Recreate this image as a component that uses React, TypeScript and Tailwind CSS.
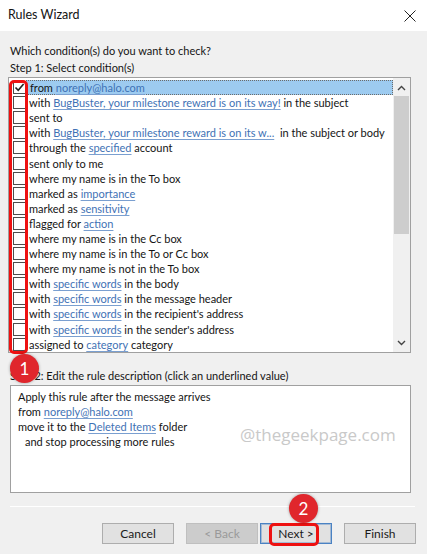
import React from "react";

type Part = string | { link: string };

const rows: Part[][] = [
  ["from ", { link: "noreply@halo.com" }],
  ["with ", { link: "BugBuster, your milestone reward is on its way!" }, " in the subject"],
  ["sent to"],
  ["with ", { link: "BugBuster, your milestone reward is on its w..." }, "\u00a0 in the subject or body"],
  ["through the ", { link: "specified" }, " account"],
  ["sent only to me"],
  ["where my name is in the To box"],
  ["marked as ", { link: "importance" }],
  ["marked as ", { link: "sensitivity" }],
  ["flagged for ", { link: "action" }],
  ["where my name is in the Cc box"],
  ["where my name is in the To or Cc box"],
  ["where my name is not in the To box"],
  ["with ", { link: "specific words" }, " in the body"],
  ["with ", { link: "specific words" }, " in the message header"],
  ["with ", { link: "specific words" }, " in the recipient's address"],
  ["with ", { link: "specific words" }, " in the sender's address"],
  ["assigned to ", { link: "category" }, " category"],
];

const Link = ({ children }: { children: React.ReactNode }) => (
  <span className="text-[#3f72b5] underline underline-offset-[2px] decoration-[#7a9fd0]">{children}</span>
);

const Checkbox = ({ checked }: { checked?: boolean }) => (
  <span className="w-[13px] h-[13px] border border-[#4d4d4d] bg-white flex items-center justify-center shrink-0">
    {checked && (
      <svg width="11" height="11" viewBox="0 0 11 11">
        <path d="M1.5 5.5 L4.2 8.3 L9.6 2" fill="none" stroke="#222" strokeWidth="1.6" />
      </svg>
    )}
  </span>
);

const Button = ({ label, variant }: { label: string; variant?: "disabled" | "default" }) => (
  <div
    className={
      "w-[72px] h-[21px] flex items-center justify-center text-[12px] border " +
      (variant === "disabled"
        ? "bg-[#cccccc] border-[#bfbfbf] text-[#9a9a9a]"
        : variant === "default"
        ? "bg-[#e1e1e1] border-[#4a82c3] text-[#1a1a1a] outline outline-1 -outline-offset-2 outline-[#4a82c3]/40"
        : "bg-[#e1e1e1] border-[#adadad] text-[#1a1a1a]")
    }
  >
    {label}
  </div>
);

export default function App() {
  return (
    <div
      className="relative w-[427px] h-[554px] bg-[#f0f0f0] overflow-hidden text-[#141414]"
      style={{ fontFamily: 'Lato, "Noto Sans", sans-serif' }}
    >
      {/* Title bar */}
      <div className="h-[31px] bg-white flex items-center justify-between pl-[8px] pr-[11px]">
        <span className="text-[12.5px]">Rules Wizard</span>
        <svg width="12" height="12" viewBox="0 0 12 12">
          <path d="M0.5 0.5 L11.5 11.5 M11.5 0.5 L0.5 11.5" stroke="#222" strokeWidth="1" />
        </svg>
      </div>

      <div className="px-[8px] pt-[12px] text-[11px]">
        <div className="pl-[2px] leading-[16px]">Which condition(s) do you want to check?</div>
        <div className="pl-[2px] leading-[16px] mt-[1px]">Step 1: Select condition(s)</div>

        {/* Conditions list */}
        <div className="mt-[1px] w-[403px] h-[276px] border border-[#a0a0a0] bg-white flex">
          <div className="flex-1 pt-[2px] pl-[4px]">
            {rows.map((parts, i) => (
              <div key={i} className="flex items-center h-[15.1px]">
                <Checkbox checked={i === 0} />
                <div
                  className={
                    "flex-1 h-full flex items-center pl-[3px] whitespace-nowrap leading-none " +
                    (i === 0 ? "bg-[#9dcbf0] border border-dotted border-[#6b6b6b]" : "")
                  }
                >
                  {parts.map((p, j) =>
                    typeof p === "string" ? <span key={j} className="whitespace-pre">{p}</span> : <Link key={j}>{p.link}</Link>
                  )}
                </div>
              </div>
            ))}
          </div>
          <div className="w-[17px] flex flex-col bg-[#f0f0f0] pt-[2px] pb-[1px]">
            <div className="h-[16px] flex items-center justify-center">
              <svg width="9" height="6" viewBox="0 0 9 6">
                <path d="M1 5 L4.5 1.5 L8 5" fill="none" stroke="#444" strokeWidth="1.4" />
              </svg>
            </div>
            <div className="h-[138px] mx-[1px] bg-[#cdcdcd]" />
            <div className="flex-1" />
            <div className="h-[16px] flex items-center justify-center">
              <svg width="9" height="6" viewBox="0 0 9 6">
                <path d="M1 1 L4.5 4.5 L8 1" fill="none" stroke="#444" strokeWidth="1.4" />
              </svg>
            </div>
          </div>
        </div>

        <div className="pl-[2px] mt-[15px] leading-[16px]">Step 2: Edit the rule description (click an underlined value)</div>

        {/* Rule description */}
        <div className="ml-[2px] mt-[1px] w-[401px] h-[108px] border border-[#a0a0a0] bg-white pl-[7px] pt-[3px] leading-[15px]">
          <div>Apply this rule after the message arrives</div>
          <div>
            from <Link>noreply@halo.com</Link>
          </div>
          <div>
            move it to the <Link>Deleted Items</Link> folder
          </div>
          <div className="pl-[7px]">and stop processing more rules</div>
        </div>

        <div className="mt-[13px] ml-[2px] mr-[4px] h-px bg-[#d5d5d5] border-b border-white" />

        {/* Buttons */}
        <div className="flex justify-end items-center mt-[16px] pr-[3px]">
          <Button label="Cancel" />
          <div className="w-[12px]" />
          <Button label="< Back" variant="disabled" />
          <div className="w-[2px]" />
          <Button label="Next >" variant="default" />
          <div className="w-[12px]" />
          <Button label="Finish" />
        </div>
      </div>

      {/* Watermark */}
      <div
        className="absolute left-[240px] top-[422px] text-[17px] text-[#c9c9c9]"
        style={{ fontFamily: '"Open Sans", sans-serif' }}
      >
        @thegeekpage.com
      </div>

      {/* Annotations */}
      <div className="absolute left-[9px] top-[80px] w-[19px] h-[274px] border-[3px] border-[#ee1111] rounded-[5px]" />
      <div className="absolute left-[10px] top-[354px] w-[29px] h-[29px] rounded-full bg-[#e0262c] shadow-[0_0_3px_rgba(0,0,0,0.35)] flex items-center justify-center text-white text-[17px]">
        1
      </div>
      <div className="absolute left-[269px] top-[523px] w-[50px] h-[23px] border-[3px] border-[#ee1111] rounded-[5px]" />
      <div className="absolute left-[289px] top-[494px] w-[29px] h-[29px] rounded-full bg-[#e0262c] shadow-[0_0_3px_rgba(0,0,0,0.35)] flex items-center justify-center text-white text-[17px]">
        2
      </div>
    </div>
  );
}
